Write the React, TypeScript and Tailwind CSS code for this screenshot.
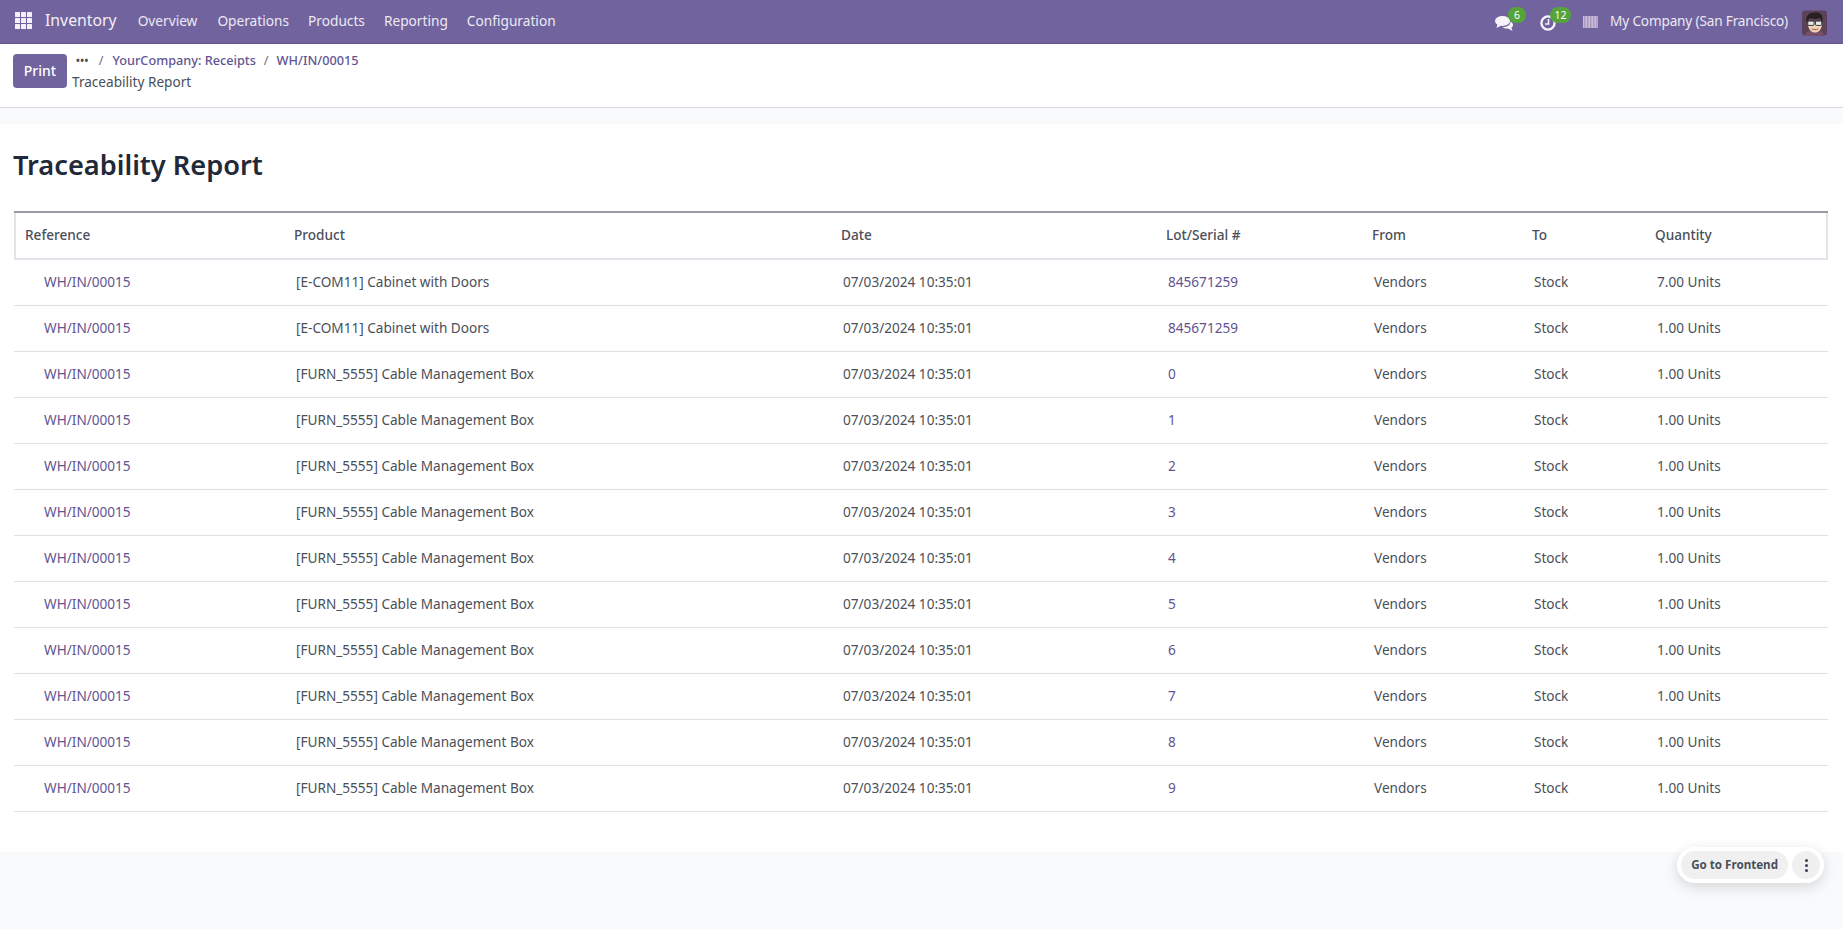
import React from "react";

const F = "font-['Noto_Sans',sans-serif]";
const rows: [string, string, string][] = [
  ["[E-COM11] Cabinet with Doors", "845671259", "7.00 Units"],
  ["[E-COM11] Cabinet with Doors", "845671259", "1.00 Units"],
  ...["0", "1", "2", "3", "4", "5", "6", "7", "8", "9"].map(
    (n) => ["[FURN_5555] Cable Management Box", n, "1.00 Units"] as [string, string, string]
  ),
];
const cols = "grid grid-cols-[269px_547px_325px_206px_160px_123px_184px]";

function Avatar() {
  return (
    <svg width="25" height="26" viewBox="0 0 26 26" className="rounded-[4px]">
      <rect width="26" height="26" fill="#5c4259" />
      <path d="M3 26c1-4 5-6 10-6s9 2 10 6z" fill="#7a4f68" />
      <path d="M6 12c0 7 3 11 7.500 11S21 19 21 12z" fill="#f3d3b8" />
      <path d="M5 13C3 6 7 2 13 2c6-1 10 3 8 11-1-3-1-5-3-5-3 1-7 1-9 0-2 0-3 2-4 5z" fill="#26211f" />
      <rect x="6" y="11" width="6.500" height="4.500" rx="1" fill="#e8e8e8" stroke="#2e2e2e" strokeWidth="1" />
      <rect x="14" y="11" width="6.500" height="4.500" rx="1" fill="#e8e8e8" stroke="#2e2e2e" strokeWidth="1" />
      <path d="M10 19c2 1.200 5 1.200 7 0" stroke="#9a5040" fill="none" />
    </svg>
  );
}

export default function App() {
  return (
    <div className={`${F} min-h-[929px] bg-[#f9fafb] text-[#4a4f59] text-[13.6px] flex flex-col`}>
      <header className="h-[44px] bg-[#71639e] border-b border-[#5f5388] flex items-center text-white pl-[15px] pr-[16px] pb-[1px]">
        <svg width="17" height="17" viewBox="0 0 17 17" fill="#f3f1f7" className="mb-[1px]">
          {[0, 6, 12].flatMap((x) =>
            [0, 6, 12].map((y) => <rect key={`${x}-${y}`} x={x} y={y} width="5" height="5" rx="0.5" />)
          )}
        </svg>
        <span className="ml-[13px] text-[15.8px] text-[#f1eff6]">Inventory</span>
        <nav className="ml-[21px] flex gap-[19px] text-[13.7px] text-[#ece9f3]">
          <span className="mr-[1px]">Overview</span>
          <span>Operations</span>
          <span>Products</span>
          <span>Reporting</span>
          <span>Configuration</span>
        </nav>
        <div className="ml-auto flex items-center text-[#ece9f3]">
          <span className="relative w-[18px] h-[14px] mt-[3px]">
            <svg width="18" height="15" viewBox="0 0 18 15" fill="#f6f4f9">
              <ellipse cx="7.500" cy="5" rx="7.500" ry="5" />
              <path d="M2.500 8 1.500 12 6.500 9.500z" />
              <path d="M15.500 5.500C17 6.300 18 7.500 18 9c0 1-.6 2-1.600 2.600L17.500 15 13 12.500c-2 .2-4-.2-5.500-1.500 4 .2 8-1.500 8-5.500z" />
            </svg>
            <span className="absolute left-[13px] top-[-9px] h-[16px] min-w-[18px] px-[4px] rounded-full bg-[#54a43a] text-[10.5px] leading-[16px] text-center text-white">6</span>
          </span>
          <span className="relative ml-[27px] w-[16px] h-[16px] mt-[3px]">
            <svg width="16" height="16" viewBox="0 0 16 16" fill="none" stroke="#f6f4f9" strokeWidth="2.300">
              <circle cx="8" cy="8" r="6.600" />
              <path d="M8.500 4v5H5" strokeWidth="1.600" />
            </svg>
            <span className="absolute left-[10px] top-[-8px] h-[16px] min-w-[21px] px-[4px] rounded-full bg-[#54a43a] text-[10.5px] leading-[16px] text-center text-white">12</span>
          </span>
          <span className="ml-[27px] w-[15px] h-[12px] mt-[1px] bg-[repeating-linear-gradient(90deg,#c4bcd8_0_1px,#a99cc4_1px_2px,#bfa9c9_2px_3px)]" />
          <span className="ml-[12px] tracking-[-0.16px]">My Company (San Francisco)</span>
          <span className="ml-[14px] flex mt-[3px]"><Avatar /></span>
        </div>
      </header>

      <div className="h-[64px] bg-white border-b border-[#d8dadd] flex pl-[13px] pt-[10px]">
        <button className="h-[34px] w-[54px] rounded-[4px] bg-[#71639e] text-[14px] text-white font-medium pb-[1px]">Print</button>
        <div className="ml-[5px] flex flex-col">
          <div className="flex items-center h-[21px] mt-[-4px] ml-[-1px] font-medium text-[#5f5491] text-[12.7px]">
            <span className="ml-[5px] font-bold tracking-[0.5px] text-[#4a4f59] text-[10px]">•••</span>
            <span className="ml-[10px] mr-[9px] font-normal text-[#6b7280]">/</span>
            <span>YourCompany: Receipts</span>
            <span className="mx-[8px] font-normal text-[#6b7280]">/</span>
            <span>WH/IN/00015</span>
          </div>
          <span className="mt-[1px]">Traceability Report</span>
        </div>
      </div>

      <main className="mt-[16px] h-[728px] bg-white pl-[14px] pr-[15px] flex flex-col">
        <h1 className="ml-[-1px] mt-[21px] text-[27.2px] leading-[40px] font-semibold text-[#1f2937]">Traceability Report</h1>
        <div className="mt-[26px] border-t-2 border-t-[#9a9ca3]">
          <div className={`${cols} h-[47px] items-center border-x-2 border-b-2 border-[#e2e4ea] font-medium text-[#4a4f59]`}>
            {["Reference", "Product", "Date", "Lot/Serial #", "From", "To", "Quantity"].map((h) => (
              <span key={h} className="pl-[9px]">{h}</span>
            ))}
          </div>
          {rows.map(([p, lot, q], i) => (
            <div key={i} className={`${cols} h-[46px] items-center border-b border-[#dee0e5] pl-[2px]`}>
              <span className="pl-[28px] text-[#5f5491]">WH/IN/00015</span>
              <span className="pl-[11px]">{p}</span>
              <span className="pl-[11px]">07/03/2024 10:35:01</span>
              <span className="pl-[11px] text-[#5f5491]">{lot}</span>
              <span className="pl-[11px]">Vendors</span>
              <span className="pl-[11px]">Stock</span>
              <span className="pl-[11px]">{q}</span>
            </div>
          ))}
        </div>
      </main>

      <div className="fixed right-[19px] bottom-[46px] flex items-center gap-[4px] rounded-full bg-white p-[4px] shadow-[0_4px_14px_rgba(0,0,0,0.15)]">
        <span className="h-[28px] px-[10px] rounded-full bg-[#f0f0f0] flex items-center text-[11.6px] font-bold text-[#4a4f59]">Go to Frontend</span>
        <span className="w-[28px] h-[28px] rounded-full bg-[#f0f0f0] flex flex-col items-center justify-center gap-[2px]">
          <i className="w-[3px] h-[3px] rounded-full bg-[#374151]" />
          <i className="w-[3px] h-[3px] rounded-full bg-[#374151]" />
          <i className="w-[3px] h-[3px] rounded-full bg-[#374151]" />
        </span>
      </div>
    </div>
  );
}
